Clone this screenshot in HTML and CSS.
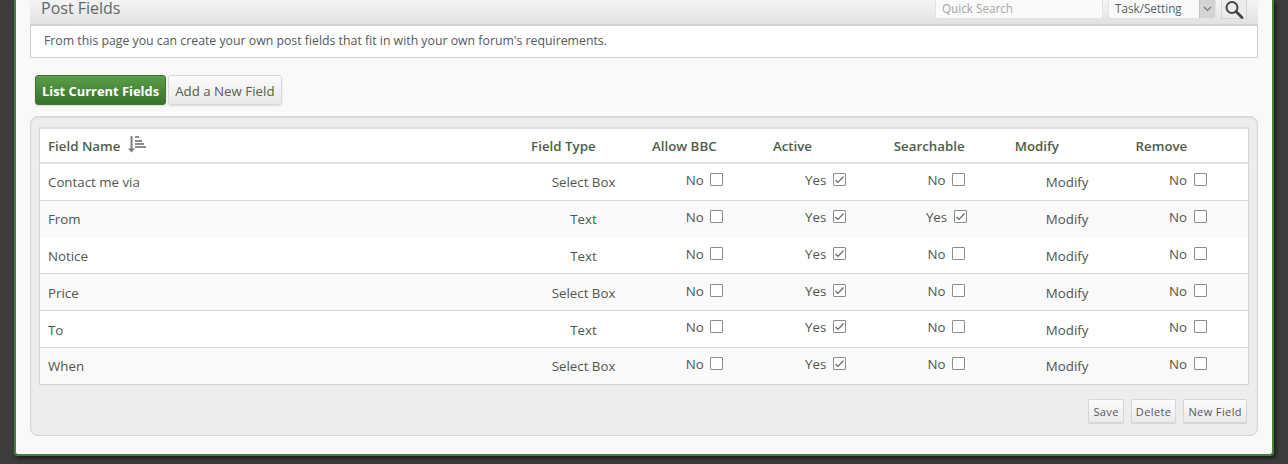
FILE: index.html
```html
<!DOCTYPE html>
<html lang="en">
<head>
  <meta charset="UTF-8" />
  <title>Post Fields</title>
  <link rel="stylesheet" href="styles.css">
</head>
<body>
  <div class="page">
    <div class="titlebar">
      <h1>Post Fields</h1>
      <div class="search">
        <div class="search-input">Quick Search</div>
        <div class="search-select">
          <span class="select-text">Task/Setting</span>
          <span class="select-arrow">
            <svg width="9" height="6" viewBox="0 0 9 6"><path d="M1 1l3.5 3.5L8 1" fill="none" stroke="#777" stroke-width="1.2"/></svg>
          </span>
        </div>
        <div class="search-btn">
          <svg width="20" height="20" viewBox="0 0 20 20"><circle cx="8" cy="7.5" r="5.5" fill="none" stroke="#444" stroke-width="2"/><path d="M12 11.5l6 6" stroke="#444" stroke-width="2.8" stroke-linecap="round"/></svg>
        </div>
      </div>
    </div>
    <div class="intro">From this page you can create your own post fields that fit in with your own forum's requirements.</div>

    <div class="tabs">
      <a class="tab tab-active">List Current Fields</a>
      <a class="tab">Add a New Field</a>
    </div>

    <div class="panel">
      <table class="fields">
        <thead>
          <tr>
            <th class="col-name">Field Name
              <svg class="sort-icon" width="18" height="17" viewBox="0 0 18 17"><path d="M3.5 0v13" stroke="#7d7d7d" stroke-width="2"/><path d="M0 12.5h7L3.5 16.5z" fill="#7d7d7d"/><path d="M7 1h4M7 5h7M7 8h9M7 11h11" stroke="#8c8c8c" stroke-width="2"/></svg>
            </th>
            <th>Field Type</th>
            <th>Allow BBC</th>
            <th>Active</th>
            <th>Searchable</th>
            <th>Modify</th>
            <th>Remove</th>
          </tr>
        </thead>
        <tbody>
          <tr>
            <td>Contact me via</td>
            <td class="mid">Select Box</td>
            <td class="mid"><span class="opt">No <i class="box"></i></span></td>
            <td class="mid"><span class="opt">Yes <i class="box"><svg width="11" height="11" viewBox="0 0 11 11"><path d="M1.5 6l2.5 2.5 5.5-6" fill="none" stroke="#666" stroke-width="1.2"/></svg></i></span></td>
            <td class="mid"><span class="opt">No <i class="box"></i></span></td>
            <td class="mid">Modify</td>
            <td class="mid"><span class="opt">No <i class="box"></i></span></td>
          </tr>
          <tr class="alt no-line">
            <td>From</td>
            <td class="mid">Text</td>
            <td class="mid"><span class="opt">No <i class="box"></i></span></td>
            <td class="mid"><span class="opt">Yes <i class="box"><svg width="11" height="11" viewBox="0 0 11 11"><path d="M1.5 6l2.5 2.5 5.5-6" fill="none" stroke="#666" stroke-width="1.2"/></svg></i></span></td>
            <td class="mid"><span class="opt">Yes <i class="box"><svg width="11" height="11" viewBox="0 0 11 11"><path d="M1.5 6l2.5 2.5 5.5-6" fill="none" stroke="#666" stroke-width="1.2"/></svg></i></span></td>
            <td class="mid">Modify</td>
            <td class="mid"><span class="opt">No <i class="box"></i></span></td>
          </tr>
          <tr class="short low">
            <td>Notice</td>
            <td class="mid">Text</td>
            <td class="mid"><span class="opt">No <i class="box"></i></span></td>
            <td class="mid"><span class="opt">Yes <i class="box"><svg width="11" height="11" viewBox="0 0 11 11"><path d="M1.5 6l2.5 2.5 5.5-6" fill="none" stroke="#666" stroke-width="1.2"/></svg></i></span></td>
            <td class="mid"><span class="opt">No <i class="box"></i></span></td>
            <td class="mid">Modify</td>
            <td class="mid"><span class="opt">No <i class="box"></i></span></td>
          </tr>
          <tr class="alt low">
            <td>Price</td>
            <td class="mid">Select Box</td>
            <td class="mid"><span class="opt">No <i class="box"></i></span></td>
            <td class="mid"><span class="opt">Yes <i class="box"><svg width="11" height="11" viewBox="0 0 11 11"><path d="M1.5 6l2.5 2.5 5.5-6" fill="none" stroke="#666" stroke-width="1.2"/></svg></i></span></td>
            <td class="mid"><span class="opt">No <i class="box"></i></span></td>
            <td class="mid">Modify</td>
            <td class="mid"><span class="opt">No <i class="box"></i></span></td>
          </tr>
          <tr class="low high-opt">
            <td>To</td>
            <td class="mid">Text</td>
            <td class="mid"><span class="opt">No <i class="box"></i></span></td>
            <td class="mid"><span class="opt">Yes <i class="box"><svg width="11" height="11" viewBox="0 0 11 11"><path d="M1.5 6l2.5 2.5 5.5-6" fill="none" stroke="#666" stroke-width="1.2"/></svg></i></span></td>
            <td class="mid"><span class="opt">No <i class="box"></i></span></td>
            <td class="mid">Modify</td>
            <td class="mid"><span class="opt">No <i class="box"></i></span></td>
          </tr>
          <tr class="alt">
            <td>When</td>
            <td class="mid">Select Box</td>
            <td class="mid"><span class="opt">No <i class="box"></i></span></td>
            <td class="mid"><span class="opt">Yes <i class="box"><svg width="11" height="11" viewBox="0 0 11 11"><path d="M1.5 6l2.5 2.5 5.5-6" fill="none" stroke="#666" stroke-width="1.2"/></svg></i></span></td>
            <td class="mid"><span class="opt">No <i class="box"></i></span></td>
            <td class="mid">Modify</td>
            <td class="mid"><span class="opt">No <i class="box"></i></span></td>
          </tr>
        </tbody>
      </table>
      <div class="actions">
        <a class="btn">Save</a>
        <a class="btn">Delete</a>
        <a class="btn">New Field</a>
      </div>
    </div>
  </div>
</body>
</html>
```

FILE: styles.css
```css
* { box-sizing: border-box; }

html, body { height: 464px; overflow: hidden; }

body {
  margin: 0;
  padding: 0 0 0 14px;
  background: #3c3c3c;
  font-family: "Open Sans", sans-serif;
  font-size: 13.3px;
  color: #4f5a4a;
}

.page {
  width: 1260px;
  height: 456px;
  padding: 0 14px;
  background: #f9f9f9;
  border: 2px solid #44803a;
  border-top: 0;
  border-radius: 0 0 4px 4px;
  box-shadow: 2px 2px 4px rgba(0,0,0,0.6);
}

.titlebar {
  display: flex;
  justify-content: space-between;
  height: 26px;
  padding: 0 11px;
  background: linear-gradient(to bottom, #f4f4f4, #e2e2e2);
  border-bottom: 2px solid #d2d2d2;
}

.titlebar h1 {
  margin: 0;
  font-size: 16px;
  line-height: 16px;
  font-weight: 400;
  color: #5e6a66;
}

.search {
  display: flex;
  gap: 5px;
  height: 19px;
}

.search-input {
  width: 168px;
  padding: 0 6px;
  background: #fafafa;
  border: 1px solid #e3e3e3;
  border-top: 0;
  border-radius: 0 0 3px 3px;
  font-size: 11.7px;
  line-height: 16px;
  color: #a5a5a5;
}

.search-select {
  display: flex;
  width: 108px;
  background: #fafafa;
  border: 1px solid #e3e3e3;
  border-top: 0;
  border-radius: 0 0 3px 3px;
}

.select-text {
  flex: 1;
  padding-left: 6px;
  font-size: 11.7px;
  line-height: 16px;
  color: #565f68;
}

.select-arrow {
  display: flex;
  align-items: center;
  justify-content: center;
  width: 16px;
  background: #d4d4d4;
  border-left: 1px solid #c4c4c4;
}

.search-btn {
  display: flex;
  justify-content: center;
  width: 26px;
  background: #ececec;
  border: 1px solid #d5d5d5;
  border-top: 0;
}

.intro {
  height: 32px;
  padding: 0 13px;
  background: #fff;
  border: 1px solid #cfcfcf;
  border-top: 0;
  font-size: 12.3px;
  line-height: 30px;
  color: #54585a;
}

.tabs {
  display: flex;
  gap: 2px;
  margin: 17px 0 11px 5px;
  height: 30px;
}

.tab {
  padding: 0 6px;
  border: 1px solid #d8d8d8;
  border-radius: 3px;
  background: linear-gradient(to bottom, #fbfbfb, #e9e9e9);
  box-shadow: 0 1px 2px rgba(0,0,0,0.12);
  line-height: 30px;
  color: #566050;
}

.tab-active {
  border-color: #3f7433;
  background: linear-gradient(to bottom, #5b9f48, #38702d);
  font-weight: 700;
  font-size: 12.9px;
  color: #fff;
}

.panel {
  height: 320px;
  padding: 10px 8px 0 8px;
  background: #ededed;
  border: 1px solid #d6d6d6;
  border-radius: 8px;
  box-shadow: inset 0 1px 2px rgba(0,0,0,0.08);
}

.fields {
  width: 1210px;
  border-collapse: collapse;
  table-layout: fixed;
  background: #fff;
  border: 1px solid #d4d4d4;
  border-top: 2px solid #e0e0e0;
}

.fields th {
  width: 10%;
  height: 35px;
  padding: 0 8px;
  text-align: left;
  font-weight: 600;
  color: #505d48;
  border-bottom: 2px solid #e0e0e0;
}

.fields th.col-name { width: 40%; }

.sort-icon {
  margin-left: 4px;
  vertical-align: -2px;
}

.fields td {
  height: 37px;
  padding: 0 8px;
  border-bottom: 1px solid #d4d4d4;
  color: #50564e;
}

.fields tr.alt td { background: #fafafa; }
.fields tr.no-line td { border-bottom: 0; }
.fields tr.short td { height: 36px; }
.fields tr.low td { padding-top: 2px; }

.fields td.mid { text-align: center; }

.opt {
  position: relative;
  top: -2px;
}

.high-opt .opt { top: -3px; }

.box {
  display: inline-block;
  width: 13px;
  height: 13px;
  margin-left: 3px;
  vertical-align: -1px;
  background: #fff;
  border: 1px solid #8c8c8c;
  border-radius: 1px;
}

.box svg { display: block; }

.actions {
  display: flex;
  justify-content: flex-end;
  gap: 7px;
  margin-top: 14px;
  padding-right: 2px;
}

.btn {
  height: 24px;
  padding: 0 4px;
  background: linear-gradient(to bottom, #fbfbfb, #ebebeb);
  border: 1px solid #d6d6d6;
  border-radius: 2px;
  box-shadow: 0 1px 1px rgba(0,0,0,0.1);
  font-size: 11px;
  letter-spacing: 0.4px;
  line-height: 23px;
  color: #5a5560;
}
```
